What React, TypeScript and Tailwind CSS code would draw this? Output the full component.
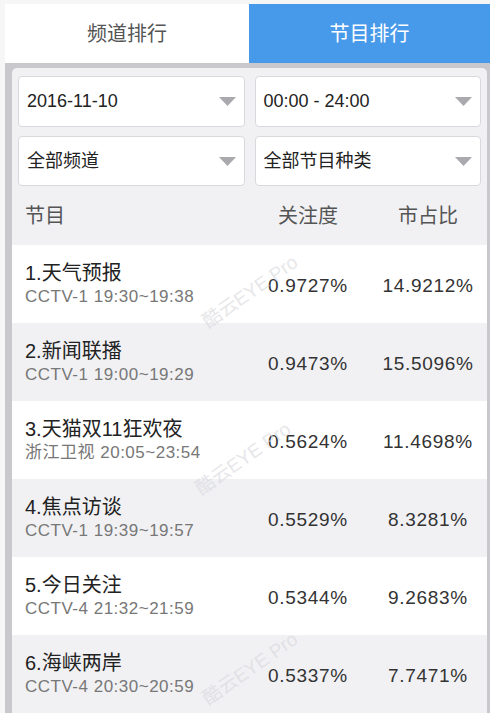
import React from "react";

const font = { fontFamily: '"Liberation Sans", "Noto Sans CJK SC", sans-serif' };

const rows = [
  { title: "1.天气预报", sub: "CCTV-1 19:30~19:38", a: "0.9727%", b: "14.9212%" },
  { title: "2.新闻联播", sub: "CCTV-1 19:00~19:29", a: "0.9473%", b: "15.5096%" },
  { title: "3.天猫双11狂欢夜", sub: "浙江卫视 20:05~23:54", a: "0.5624%", b: "11.4698%" },
  { title: "4.焦点访谈", sub: "CCTV-1 19:39~19:57", a: "0.5529%", b: "8.3281%" },
  { title: "5.今日关注", sub: "CCTV-4 21:32~21:59", a: "0.5344%", b: "9.2683%" },
  { title: "6.海峡两岸", sub: "CCTV-4 20:30~20:59", a: "0.5337%", b: "7.7471%" },
];

function Select({ label }: { label: string }) {
  return (
    <div className="flex h-full flex-1 items-center justify-between rounded-[4px] border border-[#d9d9dd] bg-white pl-[8px] pr-[8px]">
      <span className="text-[18px] text-[#222]">{label}</span>
      <svg width="17" height="9" viewBox="0 0 17 9">
        <path d="M0 0 H17 L8.5 9 Z" fill="#a9a9ae" />
      </svg>
    </div>
  );
}

function Watermark({ x, y }: { x: number; y: number }) {
  return (
    <div
      className="pointer-events-none absolute -rotate-[35deg] whitespace-nowrap text-[19px] text-[#d8d8dc] opacity-60"
      style={{ left: x, top: y }}
    >
      酷云EYE Pro
    </div>
  );
}

export default function App() {
  return (
    <div className="relative h-[713px] w-[490px] overflow-hidden bg-[#f6f6f6] pl-[5px] pt-[4px]" style={font}>
      <div className="flex h-[59px]">
        <div className="flex w-[244px] items-center justify-center bg-white text-[20px] text-[#555]">频道排行</div>
        <div className="flex flex-1 items-center justify-center bg-[#4799ea] text-[20px] text-white">节目排行</div>
      </div>
      <div className="h-full bg-[#c8c8cd] pl-[7px] pr-[3px] pt-[5px]">
        <div className="h-full rounded-t-[5px] bg-[#f1f1f4]">
          <div className="flex flex-col gap-[9px] px-[6px] pt-[8px]">
            <div className="flex h-[51px] gap-[10px]">
              <Select label="2016-11-10" />
              <Select label="00:00 - 24:00" />
            </div>
            <div className="flex h-[50px] gap-[10px]">
              <Select label="全部频道" />
              <Select label="全部节目种类" />
            </div>
          </div>
          <div className="flex h-[59px] items-center text-[20px] text-[#555]">
            <div className="flex-1 pl-[13px]">节目</div>
            <div className="w-[122px] text-center">关注度</div>
            <div className="w-[118px] text-center">市占比</div>
          </div>
          {rows.map((r, i) => (
            <div
              key={r.title}
              className={`flex h-[78px] items-center ${i % 2 === 0 ? "bg-white" : "bg-[#f1f1f4]"}`}
            >
              <div className="flex flex-1 flex-col pl-[13px]">
                <span className="text-[20px] leading-[26px] text-[#222]">{r.title}</span>
                <span className="text-[17px] leading-[22px] tracking-[0.5px] text-[#777]">{r.sub}</span>
              </div>
              <div className="w-[122px] pt-[4px] text-center text-[19px] tracking-[0.7px] text-[#333]">{r.a}</div>
              <div className="w-[118px] pt-[4px] text-center text-[19px] tracking-[0.7px] text-[#333]">{r.b}</div>
            </div>
          ))}
        </div>
      </div>
      <Watermark x={195} y={278} />
      <Watermark x={188} y={445} />
      <Watermark x={195} y={655} />
    </div>
  );
}
